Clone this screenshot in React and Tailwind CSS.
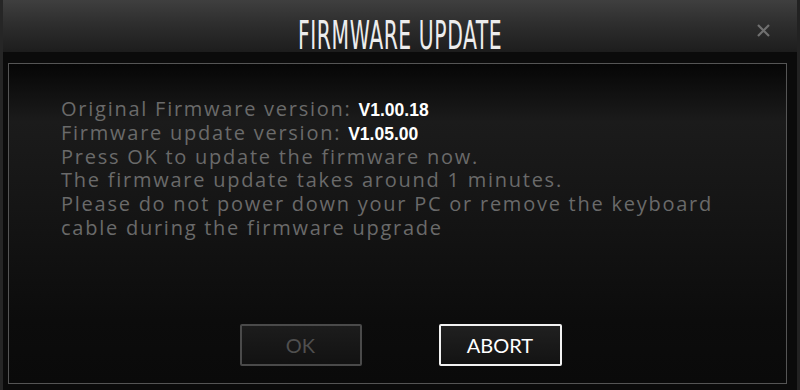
import React from 'react';

function App() {
  return (
    <div className="w-[800px] h-[390px] flex flex-col bg-[#0e0e0e] border-l-[3px] border-r-[3px] border-l-[#262626] border-r-[#222] overflow-hidden">
      <header className="relative h-[52px] flex items-center justify-center bg-[linear-gradient(180deg,#3f3f3f_0%,#2e2e2e_45%,#1d1d1d_100%)]">
        <h1 className="font-['DejaVu_Sans_Condensed','Liberation_Sans',sans-serif] text-[39px] leading-none text-[#ededed] tracking-[1px] scale-x-[0.58] whitespace-nowrap mt-[19px]">
          FIRMWARE UPDATE
        </h1>
        <button className="absolute right-[27px] top-[24px] w-[13px] h-[13px] text-[#707070]">
          <svg viewBox="0 0 13 13" className="w-full h-full" fill="none" stroke="currentColor" strokeWidth="2.2">
            <path d="M1 1 L12 12 M12 1 L1 12" />
          </svg>
        </button>
      </header>

      <div className="flex-1 flex flex-col pl-[5px] pr-[10px] pt-[11px] pb-[6px] bg-[#0b0b0b]">
        <div className="flex-1 flex flex-col border border-[#555] bg-[linear-gradient(180deg,#060606_0%,#1b1b1b_18%,#151515_45%,#0c0c0c_80%,#0a0a0a_100%)] pl-[52px] pt-[33px] pb-[17px]">
          <div className="font-['Open_Sans','Noto_Sans',sans-serif] text-[20px] leading-[23.8px] text-[#6a6a6a] tracking-[1.75px] whitespace-nowrap">
            <p>
              Original Firmware version:{' '}
              <span className="font-['Liberation_Sans',Arial,sans-serif] text-white font-bold text-[17.5px] leading-none tracking-normal">
                V1.00.18
              </span>
            </p>
            <p>
              Firmware update version:{' '}
              <span className="font-['Liberation_Sans',Arial,sans-serif] text-white font-bold text-[17.5px] leading-none tracking-normal">
                V1.05.00
              </span>
            </p>
            <p>Press OK to update the firmware now.</p>
            <p>The firmware update takes around 1 minutes.</p>
            <p>Please do not power down your PC or remove the keyboard</p>
            <p>cable during the firmware upgrade</p>
          </div>

          <div className="flex-1" />

          <div className="flex justify-center gap-[77px] pr-[46px] font-['Lato','Open_Sans',sans-serif] text-[20px]">
            <button className="w-[122px] h-[42px] rounded-[2px] border-2 border-[#4a4a4a] bg-[linear-gradient(180deg,#1c1c1c,#121212)] text-[#4f4f4f]">
              OK
            </button>
            <button className="w-[123px] h-[42px] rounded-[2px] border-2 border-[#f2f2f2] bg-[linear-gradient(180deg,#202020,#131313)] text-white">
              ABORT
            </button>
          </div>
        </div>
      </div>
    </div>
  );
}

export default App;
